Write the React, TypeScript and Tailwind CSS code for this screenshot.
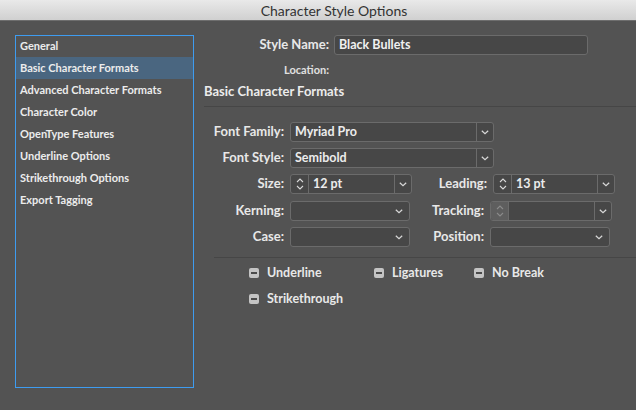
import React from 'react';

const font = { fontFamily: 'Lato, "Open Sans", sans-serif' };

const navItems = [
  'General',
  'Basic Character Formats',
  'Advanced Character Formats',
  'Character Color',
  'OpenType Features',
  'Underline Options',
  'Strikethrough Options',
  'Export Tagging',
];

function Chevron() {
  return (
    <svg width="8" height="5" viewBox="0 0 8 5" className="shrink-0">
      <path d="M0.8 0.8 L4 3.8 L7.2 0.8" fill="none" stroke="#d8d8d8" strokeWidth="1.2" />
    </svg>
  );
}

function Spinner({ disabled }: { disabled?: boolean }) {
  const c = disabled ? '#8a8a8a' : '#d8d8d8';
  return (
    <div
      className={`flex h-full w-[18px] shrink-0 items-center justify-center border-r border-[#6b6b6b] ${
        disabled ? 'bg-[#5e5e5e]' : ''
      }`}
    >
      <svg width="8" height="14" viewBox="0 0 8 14">
        <path d="M1 5 L4 2 L7 5" fill="none" stroke={c} strokeWidth="1.1" />
        <path d="M1 9 L4 12 L7 9" fill="none" stroke={c} strokeWidth="1.1" />
      </svg>
    </div>
  );
}

// Dropdown with a separated arrow cell
function Combo({ value, width, spinner, disabledSpinner }: { value?: string; width: string; spinner?: boolean; disabledSpinner?: boolean }) {
  return (
    <div className={`flex h-[20px] ${width} items-stretch overflow-hidden rounded-[3px] border border-[#6b6b6b] bg-[#474747]`}>
      {spinner && <Spinner disabled={disabledSpinner} />}
      <div className="flex flex-1 items-center pl-[4px] text-[12.5px] text-[#ececec]">{value}</div>
      <div className="flex w-[17px] items-center justify-center border-l border-[#6b6b6b]">
        <Chevron />
      </div>
    </div>
  );
}

// Plain popup select, chevron only
function Popup({ width }: { width: string }) {
  return (
    <div className={`flex h-[20px] ${width} items-center justify-end rounded-[3px] border border-[#6b6b6b] bg-[#474747] pr-[6px]`}>
      <Chevron />
    </div>
  );
}

function Check({ label, className }: { label: string; className?: string }) {
  return (
    <div className={`flex items-center ${className ?? ''}`}>
      <div className="flex h-[10px] w-[10px] items-center justify-center rounded-[2px] bg-[#c4c4c4]">
        <div className="h-[2px] w-[6px] bg-[#4a4a4a]" />
      </div>
      <span className="ml-[8px] text-[12.5px] text-[#e8e8e8]">{label}</span>
    </div>
  );
}

function Label({ children, width }: { children: React.ReactNode; width: string }) {
  return <div className={`${width} shrink-0 whitespace-nowrap text-right text-[13px] text-[#e8e8e8]`}>{children}:</div>;
}

export default function App() {
  return (
    <div className="h-[410px] w-[636px] overflow-hidden bg-[#535353] font-bold" style={font}>
      {/* Title bar */}
      <div className="flex h-[21px] items-center justify-center border-b border-[#6e6e6e] bg-gradient-to-b from-[#e9e9e9] to-[#d0d0d0] pl-[32px] text-[14px] font-normal text-[#333333]">
        Character Style Options
      </div>

      <div className="flex pl-[15px] pt-[14px]">
        {/* Category list */}
        <div className="h-[353px] w-[179px] shrink-0 border border-[#3e9cf0]">
          {navItems.map((item, i) => (
            <div
              key={item}
              className={`flex items-center pl-[4px] text-[11px] text-[#ececec] ${i === 0 ? 'h-[21px]' : 'h-[22px]'} ${
                item === 'Basic Character Formats' ? 'bg-[#4a6680]' : ''
              }`}
            >
              {item}
            </div>
          ))}
        </div>

        {/* Settings */}
        <div className="ml-[10px] flex-1">
          <div className="flex items-center">
            <Label width="w-[125px]">Style Name</Label>
            <div className="ml-[5px] flex h-[20px] w-[254px] items-center rounded-[3px] border border-[#6b6b6b] bg-[#474747] pl-[4px] text-[12.5px] text-[#f0f0f0]">
              Black Bullets
            </div>
          </div>
          <div className="mt-[7px] flex h-[16px] items-center">
            <div className="w-[125px] text-right text-[11px] text-[#e0e0e0]">Location:</div>
          </div>
          <div className="mt-[4px] flex h-[20px] items-center text-[13px] text-[#ececec]">Basic Character Formats</div>
          <div className="mt-[4px] h-px bg-[#464646]" />

          <div className="mt-[15px] flex flex-col gap-[6px]">
            <div className="flex items-center">
              <Label width="w-[80px]">Font Family</Label>
              <div className="ml-[6px]"><Combo value="Myriad Pro" width="w-[204px]" /></div>
            </div>
            <div className="flex items-center">
              <Label width="w-[80px]">Font Style</Label>
              <div className="ml-[6px]"><Combo value="Semibold" width="w-[204px]" /></div>
            </div>
            <div className="flex items-center">
              <Label width="w-[80px]">Size</Label>
              <div className="ml-[6px]"><Combo value="12 pt" width="w-[122px]" spinner /></div>
              <Label width="w-[75px]">Leading</Label>
              <div className="ml-[6px]"><Combo value="13 pt" width="w-[122px]" spinner /></div>
            </div>
            <div className="mt-[1px] flex items-center">
              <Label width="w-[80px]">Kerning</Label>
              <div className="ml-[6px]"><Popup width="w-[120px]" /></div>
              <Label width="w-[74px]">Tracking</Label>
              <div className="ml-[6px]"><Combo width="w-[122px]" spinner disabledSpinner /></div>
            </div>
            <div className="flex items-center">
              <Label width="w-[80px]">Case</Label>
              <div className="ml-[6px]"><Popup width="w-[120px]" /></div>
              <Label width="w-[74px]">Position</Label>
              <div className="ml-[6px]"><Popup width="w-[120px]" /></div>
            </div>
          </div>

          <div className="ml-[10px] mt-[10px] h-px bg-[#464646]" />

          <div className="mt-[6px] flex flex-col gap-[8px] pl-[45px]">
            <div className="flex h-[18px] items-center">
              <Check label="Underline" className="w-[125px]" />
              <Check label="Ligatures" className="w-[100px]" />
              <Check label="No Break" />
            </div>
            <div className="flex h-[18px] items-center">
              <Check label="Strikethrough" />
            </div>
          </div>
        </div>
      </div>
    </div>
  );
}
